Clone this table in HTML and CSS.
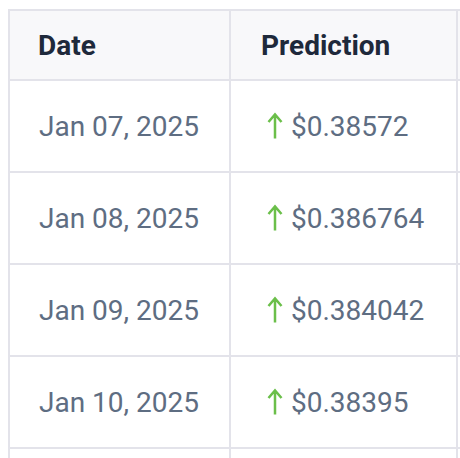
FILE: index.html
```html
<!DOCTYPE html>
<html lang="en">
<head>
<meta charset="utf-8">
<title>Predictions</title>
<link rel="stylesheet" href="styles.css">
</head>
<body>
<div class="frame">
  <div class="table" role="table">
    <div class="cell head" role="columnheader">Date</div>
    <div class="cell head head-pred" role="columnheader">Prediction</div>
    <div class="cell head" role="columnheader"></div>

    <div class="cell">Jan 07, 2025</div>
    <div class="cell"><svg class="up" width="24" height="28" viewBox="0 0 24 28"><path d="M15 26.5V2.5M8.5 10L15 2.5l6.5 7.5"/></svg><span>$0.38572</span></div>
    <div class="cell"></div>

    <div class="cell">Jan 08, 2025</div>
    <div class="cell"><svg class="up" width="24" height="28" viewBox="0 0 24 28"><path d="M15 26.5V2.5M8.5 10L15 2.5l6.5 7.5"/></svg><span>$0.386764</span></div>
    <div class="cell"></div>

    <div class="cell">Jan 09, 2025</div>
    <div class="cell"><svg class="up" width="24" height="28" viewBox="0 0 24 28"><path d="M15 26.5V2.5M8.5 10L15 2.5l6.5 7.5"/></svg><span>$0.384042</span></div>
    <div class="cell"></div>

    <div class="cell">Jan 10, 2025</div>
    <div class="cell"><svg class="up" width="24" height="28" viewBox="0 0 24 28"><path d="M15 26.5V2.5M8.5 10L15 2.5l6.5 7.5"/></svg><span>$0.38395</span></div>
    <div class="cell"></div>

    <div class="cell"></div>
    <div class="cell"></div>
    <div class="cell"></div>
  </div>
</div>
</body>
</html>
```

FILE: styles.css
```css
html, body {
  margin: 0;
  padding: 0;
  background: #ffffff;
  overflow: hidden;
}

.frame {
  padding: 9px 0 0 8px;
  width: 460px;
  height: 458px;
  box-sizing: border-box;
  overflow: hidden;
}

.table {
  display: grid;
  grid-template-columns: 221px 227px 220px;
  grid-template-rows: 70px;
  grid-auto-rows: 92px;
  border-left: 2px solid #e3e3ea;
  border-top: 2px solid #e3e3ea;
  width: max-content;
  font-family: Roboto, "Liberation Sans", sans-serif;
  font-size: 28px;
  color: #5e6d82;
}

.cell {
  box-sizing: border-box;
  display: flex;
  align-items: center;
  padding-left: 29px;
  border-right: 2px solid #e3e3ea;
  border-bottom: 2px solid #e3e3ea;
  white-space: nowrap;
}

.head {
  background: #f8f8fa;
  color: #1e293b;
  font-weight: 700;
  padding-left: 28px;
}

.head-pred {
  padding-left: 30px;
}

.up {
  flex: none;
  margin-right: 7px;
}

.up path {
  fill: none;
  stroke: #6bbf4a;
  stroke-width: 2.5;
  stroke-linecap: butt;
  stroke-linejoin: miter;
}
```
